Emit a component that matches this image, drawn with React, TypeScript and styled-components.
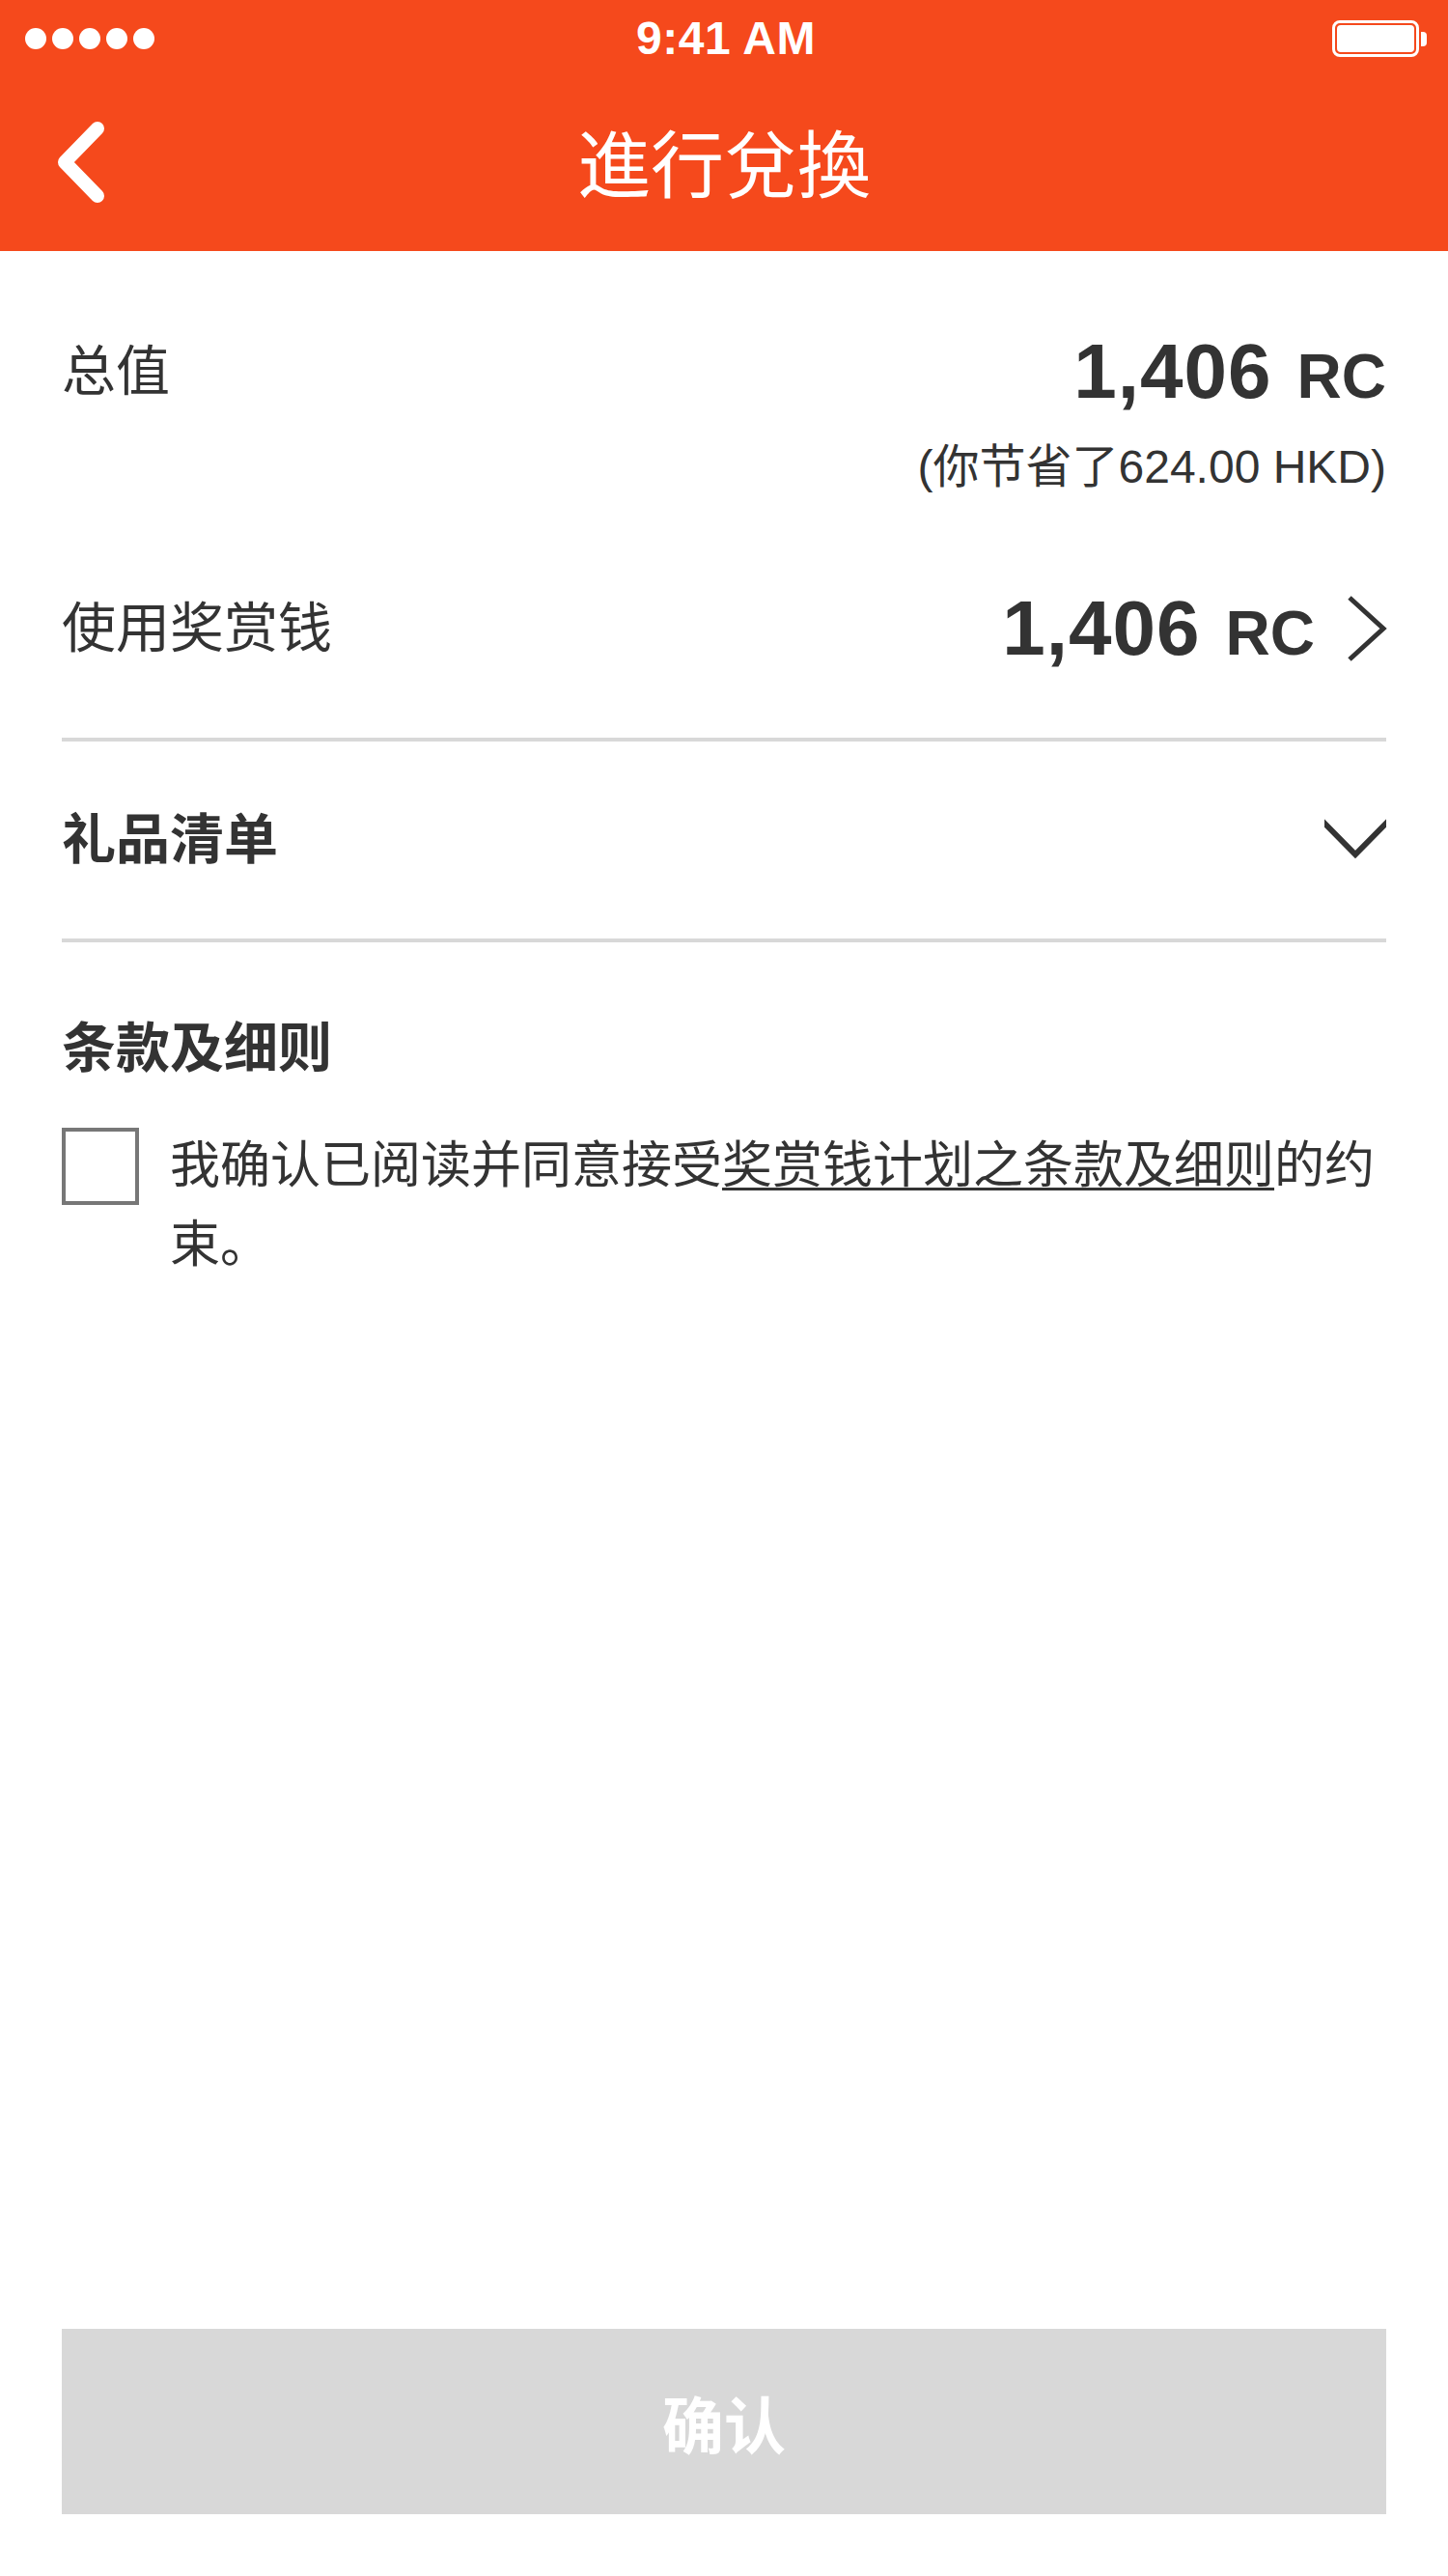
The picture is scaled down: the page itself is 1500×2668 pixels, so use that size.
import React from 'react';
import styled, { createGlobalStyle } from 'styled-components';

const GlobalStyle = createGlobalStyle`
  html, body {
    margin: 0;
    padding: 0;
    background: #fff;
  }
  body {
    font-family: 'Liberation Sans', 'Noto Sans CJK SC', sans-serif;
    color: #333;
  }
`;

const BackIcon = () => (
  <svg width='60' height='90' viewBox='0 0 60 90'>
    <path
      d='M51 10 L17 45 L51 80'
      fill='none'
      stroke='#fff'
      strokeWidth='14'
      strokeLinecap='round'
      strokeLinejoin='round'
    />
  </svg>
);

const ChevronRight = () => (
  <svg width='44' height='68' viewBox='0 0 44 68'>
    <path d='M4 2 L39 34 L4 66' fill='none' stroke='#333' strokeWidth='5' />
  </svg>
);

const ChevronDown = () => (
  <svg width='64' height='44' viewBox='0 0 64 44'>
    <path d='M-2 2.5 L32 37 L66 2.5' fill='none' stroke='#333' strokeWidth='6' />
  </svg>
);

export default function App() {
  return (
    <Page>
      <GlobalStyle />
      <Header>
        <StatusBar>
          <Signal>
            {[0, 1, 2, 3, 4].map((i) => (
              <Dot key={i} />
            ))}
          </Signal>
          <Time>9:41 AM</Time>
          <Battery>
            <BatteryBody>
              <BatteryFill />
            </BatteryBody>
            <BatteryTip />
          </Battery>
        </StatusBar>
        <NavBar>
          <BackButton>
            <BackIcon />
          </BackButton>
          <Title>進行兌換</Title>
          <span />
        </NavBar>
      </Header>

      <Content>
        <TotalSection>
          <Row>
            <Label>总值</Label>
            <Amount>
              1,406<Unit>RC</Unit>
            </Amount>
          </Row>
          <Savings>(你节省了624.00 HKD)</Savings>
        </TotalSection>

        <RewardRow>
          <Label>使用奖赏钱</Label>
          <AmountGroup>
            <Amount>
              1,406<Unit>RC</Unit>
            </Amount>
            <ChevronRight />
          </AmountGroup>
        </RewardRow>

        <Divider />

        <GiftRow>
          <Label $bold>礼品清单</Label>
          <ChevronDown />
        </GiftRow>

        <Divider />

        <TermsTitle>条款及细则</TermsTitle>
        <AgreeRow>
          <CheckBox />
          <AgreeText>
            <span>我确认已阅读并同意接受</span>
            <TermsLink>奖赏钱计划之条款及细则</TermsLink>
            <span>的约</span>
            <span>束。</span>
          </AgreeText>
        </AgreeRow>

        <ConfirmButton disabled>确认</ConfirmButton>
      </Content>
    </Page>
  );
}

const Page = styled.div`
  width: 1500px;
  min-height: 2668px;
  display: flex;
  flex-direction: column;
  background: #fff;
`;

const Header = styled.header`
  height: 260px;
  background: #f5491c;
  color: #fff;
  display: flex;
  flex-direction: column;
`;

const StatusBar = styled.div`
  height: 80px;
  display: grid;
  grid-template-columns: 1fr auto 1fr;
  align-items: center;
  padding: 0 22px 0 26px;
`;

const Signal = styled.div`
  display: flex;
  gap: 6px;
`;

const Dot = styled.span`
  width: 22px;
  height: 22px;
  border-radius: 50%;
  background: #fff;
`;

const Time = styled.div`
  font-size: 48px;
  font-weight: 700;
  line-height: 1;
  letter-spacing: 0.5px;
`;

const Battery = styled.div`
  justify-self: end;
  display: flex;
  align-items: center;
  gap: 2px;
`;

const BatteryBody = styled.div`
  width: 90px;
  height: 38px;
  box-sizing: border-box;
  border: 3px solid #fff;
  border-radius: 8px;
  padding: 2px;
`;

const BatteryFill = styled.div`
  height: 100%;
  background: #fff;
  border-radius: 4px;
`;

const BatteryTip = styled.div`
  width: 6px;
  height: 15px;
  background: #fff;
  border-radius: 0 4px 4px 0;
`;

const NavBar = styled.div`
  flex: 1;
  display: grid;
  grid-template-columns: 1fr auto 1fr;
  align-items: center;
`;

const BackButton = styled.div`
  justify-self: start;
  margin: 0 0 4px 50px;
  display: flex;
  cursor: pointer;
`;

const Title = styled.h1`
  margin: 0;
  padding-top: 5px;
  font-size: 76px;
  font-weight: 400;
  line-height: 1;
`;

const Content = styled.main`
  flex: 1;
  display: flex;
  flex-direction: column;
  padding: 0 64px;
`;

const TotalSection = styled.section`
  padding-top: 85px;
`;

const Row = styled.div`
  display: flex;
  justify-content: space-between;
  align-items: flex-start;
`;

const Label = styled.div<{ $bold?: boolean }>`
  font-size: 56px;
  line-height: 80px;
  font-weight: ${(p) => (p.$bold ? 700 : 400)};
  white-space: nowrap;
`;

const Amount = styled.div`
  font-size: 80px;
  line-height: 80px;
  font-weight: 700;
  letter-spacing: 1px;
  white-space: nowrap;
`;

const Unit = styled.span`
  margin-left: 26px;
  font-size: 64px;
  line-height: 1;
  letter-spacing: 0;
`;

const Savings = styled.div`
  margin-top: 29px;
  text-align: right;
  font-size: 48px;
  line-height: 60px;
`;

const RewardRow = styled.div`
  display: flex;
  justify-content: space-between;
  align-items: center;
  padding: 97px 0 73px;
`;

const AmountGroup = styled.div`
  display: flex;
  align-items: center;
  gap: 32px;
  margin-right: -2px;
`;

const Divider = styled.hr`
  margin: 0;
  border: none;
  height: 4px;
  background: #d8d8d8;
`;

const GiftRow = styled.div`
  height: 204px;
  display: flex;
  justify-content: space-between;
  align-items: center;
  cursor: pointer;
`;

const TermsTitle = styled.h2`
  margin: 70px 0 0;
  font-size: 56px;
  line-height: 80px;
  font-weight: 700;
`;

const AgreeRow = styled.div`
  display: flex;
  align-items: flex-start;
  margin-top: 40px;
`;

const CheckBox = styled.span`
  flex-shrink: 0;
  width: 80px;
  height: 80px;
  margin-top: 2px;
  box-sizing: border-box;
  border: 4px solid #777;
`;

const AgreeText = styled.p`
  margin: 0 0 0 32px;
  font-size: 52px;
  line-height: 82px;
`;

const TermsLink = styled.span`
  text-decoration: underline;
  text-decoration-thickness: 3px;
  text-underline-offset: 5px;
`;

const ConfirmButton = styled.button`
  margin: auto 0 64px;
  height: 192px;
  border: none;
  background: #d8d8d8;
  color: #fff;
  font-family: inherit;
  font-size: 64px;
  font-weight: 700;
`;
